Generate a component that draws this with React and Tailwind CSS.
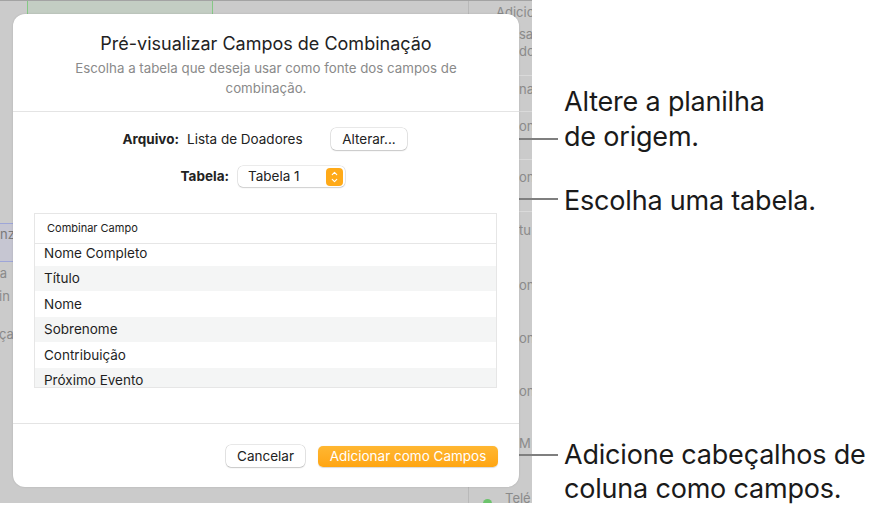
import { ChevronUp, ChevronDown } from 'lucide-react';

const rows = ['Nome Completo', 'Título', 'Nome', 'Sobrenome', 'Contribuição', 'Próximo Evento'];

const rightBits = [
    { t: 'sa', y: 25 },
    { t: 'dc', y: 42 },
    { t: 'na', y: 80 },
    { t: 'on', y: 117 },
    { t: 'on', y: 168 },
    { t: 'tu', y: 221 },
    { t: 'on', y: 276 },
    { t: 'on', y: 329 },
    { t: 'on', y: 382 },
    { t: 'M', y: 434 },
];

const leftBits = [
    { t: 'sa', y: 264, x: -7 },
    { t: 'in', y: 287, x: -1 },
    { t: 'ça', y: 325, x: -1 },
];

const Background = () => (
    <>
        <div className="absolute left-[27px] top-0 w-[186px] h-[14px] bg-[#c3cdc3] border-l border-r border-[#86c886]" />
        <div className="absolute left-[468px] top-0 w-[64px] h-full border-l border-[#b9b9b9]">
            <div className="h-[75px] border-b border-[#dadada]" />
            <div className="h-[36px] border-b border-[#dadada]" />
            <div className="h-[48px] border-b border-[#dadada]" />
            <div className="h-[52px] border-b border-[#dadada]" />
        </div>
        <span className="absolute left-[496px] top-[3px] text-[13px] leading-[16px] text-[#8a8a8a]">Adicionar</span>
        {rightBits.map((b, i) => (
            <span key={i} className="absolute left-[519px] text-[13px] leading-[16px] text-[#8a8a8a]" style={{ top: b.y }}>{b.t}</span>
        ))}
        <span className="absolute left-[505px] top-[489px] text-[13px] leading-[16px] text-[#8a8a8a]">Telé</span>
        <div className="absolute left-[483px] top-[498px] w-[9px] h-[9px] rounded-full bg-[#6cc36c]" />
        <div className="absolute left-[-2px] top-[222px] w-[16px] h-[39px] bg-[#c6c6d2] border border-[#9ea6d8] text-[13px] leading-[16px] text-[#7a7a7a] pt-[2px] pl-[1px]">nz</div>
        {leftBits.map((b, i) => (
            <span key={i} className="absolute text-[13px] leading-[16px] text-[#8a8a8a]" style={{ top: b.y, left: b.x }}>{b.t}</span>
        ))}
    </>
);

const Dialog = () => (
    <div className="relative z-10 ml-[13px] mt-[13px] w-[506px] h-[473px] bg-white rounded-[12px] shadow-[0_0_2px_rgba(0,0,0,0.15)] flex flex-col">
        <div className="pt-[19px] pb-[13px] border-b border-[#e4e4e4] text-center">
            <h1 className="text-[18px] leading-[22px] text-[#222]">Pré-visualizar Campos de Combinação</h1>
            <p className="mt-[4px] px-[40px] text-[13.3px] leading-[19.5px] text-[#8a8a8a]">
                Escolha a tabela que deseja usar como fonte dos campos de combinação.
            </p>
        </div>

        <div className="flex items-center h-[22px] mt-[16px] pl-[109px] text-[13.5px] text-[#222]">
            <span className="w-[57px] text-right font-bold">Arquivo:</span>
            <span className="w-[152px] pl-[8px]">Lista de Doadores</span>
            <button className="w-[76px] h-[22px] rounded-[5px] bg-white shadow-[0_0_0_0.5px_rgba(0,0,0,0.18),0_1px_1.5px_rgba(0,0,0,0.14)] text-[13.5px] text-[#222]">
                Alterar...
            </button>
        </div>

        <div className="flex items-center h-[21px] mt-[16px] pl-[166px] text-[13.5px] text-[#222]">
            <span className="w-[50px] text-right font-bold">Tabela:</span>
            <div className="ml-[9px] w-[107px] h-[21px] rounded-[5px] bg-white shadow-[0_0_0_0.5px_rgba(0,0,0,0.16),0_1px_1.5px_rgba(0,0,0,0.12)] flex items-center justify-between pl-[10px] pr-[2px]">
                <span>Tabela 1</span>
                <span className="w-[17px] h-[18px] rounded-[4px] bg-[#ffaa18] flex flex-col items-center justify-center text-white">
                    <ChevronUp size={9} strokeWidth={3} className="-mb-[1px]" />
                    <ChevronDown size={9} strokeWidth={3} className="-mt-[1px]" />
                </span>
            </div>
        </div>

        <div className="mt-[26px] ml-[21px] w-[463px] h-[175px] border border-[#e6e6e6] flex flex-col">
            <div className="h-[30px] shrink-0 border-b border-[#e6e6e6] flex items-center pl-[12px] text-[11px] text-[#222]">
                Combinar Campo
            </div>
            <div className="flex-1 overflow-hidden">
                <div className="-mt-[4px]">
                    {rows.map((r, i) => (
                        <div key={r} className={`h-[25.5px] flex items-center pl-[9px] text-[13.5px] text-[#1f1f1f] ${i % 2 === 1 ? 'bg-[#f4f5f5]' : 'bg-white'}`}>
                            {r}
                        </div>
                    ))}
                </div>
            </div>
        </div>

        <div className="mt-[35px] border-t border-[#e4e4e4] flex justify-end items-center gap-[13px] pt-[21px] pr-[21px]">
            <button className="w-[79px] h-[22px] rounded-[5px] bg-white shadow-[0_0_0_0.5px_rgba(0,0,0,0.18),0_1px_1.5px_rgba(0,0,0,0.14)] text-[13.5px] text-[#222]">
                Cancelar
            </button>
            <button className="w-[180px] h-[21px] rounded-[5px] bg-gradient-to-b from-[#ffb731] to-[#ffa510] shadow-[0_0.5px_1px_rgba(0,0,0,0.15)] text-[13.5px] text-white">
                Adicionar como Campos
            </button>
        </div>
    </div>
);

export default function App() {
    return (
        <div className="relative w-[886px] h-[513px] bg-white flex font-['Inter',sans-serif] overflow-hidden">
            <div className="relative w-[532px] h-[503px] shrink-0 bg-[#cbcbcb] border-t border-[#a3a3a3] overflow-hidden">
                <Background />
                <Dialog />
            </div>

            <div className="pl-[32px] text-[27px] text-[#1a1a1a] leading-[35px] tracking-[-0.2px] whitespace-nowrap">
                <p className="mt-[84px]">Altere a planilha<br />de origem.</p>
                <p className="mt-[29px]">Escolha uma tabela.</p>
                <p className="mt-[220px] leading-[34px]">Adicione cabeçalhos de<br />coluna como campos.</p>
            </div>

            {/* callout lines */}
            <div className="absolute left-[407px] top-[138px] w-[151px] h-[2px] bg-[#7f7f7f]" />
            <div className="absolute left-[290px] top-[188px] w-[2px] h-[12px] bg-[#7f7f7f]" />
            <div className="absolute left-[290px] top-[198px] w-[268px] h-[2px] bg-[#7f7f7f]" />
            <div className="absolute left-[497px] top-[454px] w-[61px] h-[2px] bg-[#7f7f7f]" />
        </div>
    );
}
